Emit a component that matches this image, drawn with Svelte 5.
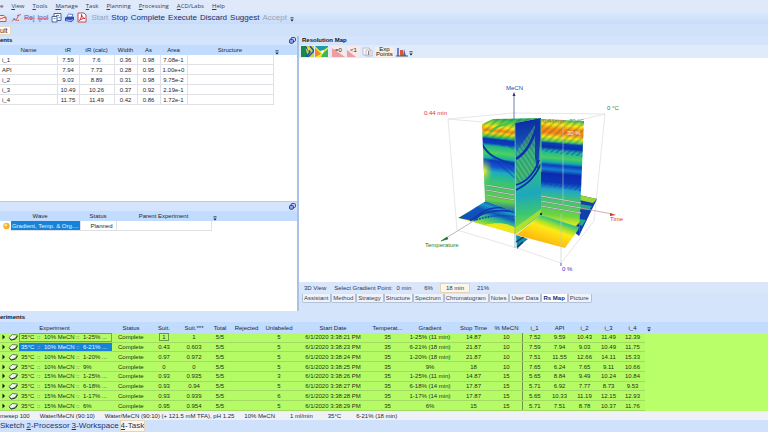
<script lang="ts">
  type Peak = { name: string; values: string[] };
  type Run = { parts: string[]; values: string[] };

  const menu = [
    { key: "V", rest: "iew" },
    { key: "T", rest: "ools" },
    { key: "M", rest: "anage" },
    { key: "T", rest: "ask" },
    { key: "P", rest: "lanning" },
    { key: "P", rest: "rocessing" },
    { key: "A", rest: "CD/Labs" },
    { key: "H", rest: "elp" },
  ];

  const actions = ["Start", "Stop", "Complete", "Execute", "Discard", "Suggest", "Accept"];
  const disabledActions = ["Start", "Accept"];

  const peakHeads = ["Name", "tR", "tR (calc)", "Width", "As", "Area", "Structure"];
  const peaks: Peak[] = [
    { name: "i_1", values: ["7.59", "7.6", "0.36", "0.98", "7.08e-1"] },
    { name: "API", values: ["7.94", "7.73", "0.28", "0.95", "1.00e+0"] },
    { name: "i_2", values: ["9.03", "8.89", "0.31", "0.98", "9.75e-2"] },
    { name: "i_3", values: ["10.49", "10.26", "0.37", "0.92", "2.19e-1"] },
    { name: "i_4", values: ["11.75", "11.49", "0.42", "0.86", "1.72e-1"] },
  ];

  const points = ["0 min", "6%", "18 min", "21%"];
  let point = $state("18 min");

  const tabs = ["Assistant", "Method", "Strategy", "Structure", "Spectrum", "Chromatogram", "Notes", "User Data", "Rs Map", "Picture"];
  let tab = $state("Rs Map");

  const runHeads = ["Status", "Suit.", "Suit.***", "Total", "Rejected", "Unlabeled", "Start Date", "Temperat...", "Gradient", "Stop Time", "% MeCN", "i_1", "API", "i_2", "i_3", "i_4"];
  const runs: Run[] = [
    { parts: ["10% MeCN", "1-25% ..."], values: ["Complete", "1", "1", "5/5", "", "5", "6/1/2020 3:38:21 PM", "35", "1-25% (11 min)", "14.87", "10", "7.52", "9.59", "10.43", "11.49", "12.39"] },
    { parts: ["10% MeCN", "6-21% ..."], values: ["Complete", "0.43", "0.603", "5/5", "", "5", "6/1/2020 3:38:23 PM", "35", "6-21% (18 min)", "21.87", "10", "7.59", "7.94", "9.03", "10.49", "11.75"] },
    { parts: ["10% MeCN", "1-20% ..."], values: ["Complete", "0.97", "0.972", "5/5", "", "5", "6/1/2020 3:38:24 PM", "35", "1-20% (18 min)", "21.87", "10", "7.51", "11.55", "12.66", "14.11", "15.33"] },
    { parts: ["10% MeCN", "9%"], values: ["Complete", "0", "0", "5/5", "", "5", "6/1/2020 3:38:25 PM", "35", "9%", "18", "10", "7.65", "6.24", "7.65", "9.11", "10.66"] },
    { parts: ["15% MeCN", "1-25% ..."], values: ["Complete", "0.93", "0.935", "5/5", "", "3", "6/1/2020 3:38:26 PM", "35", "1-25% (11 min)", "14.87", "15", "5.65", "8.84", "9.49", "10.24", "10.84"] },
    { parts: ["15% MeCN", "6-18% ..."], values: ["Complete", "0.93", "0.94", "5/5", "", "5", "6/1/2020 3:38:27 PM", "35", "6-18% (14 min)", "17.87", "15", "5.71", "6.92", "7.77", "8.73", "9.53"] },
    { parts: ["15% MeCN", "1-17% ..."], values: ["Complete", "0.93", "0.939", "5/5", "", "6", "6/1/2020 3:38:28 PM", "35", "1-17% (14 min)", "17.87", "15", "5.65", "10.33", "11.19", "12.15", "12.93"] },
    { parts: ["15% MeCN", "6%"], values: ["Complete", "0.95", "0.954", "5/5", "", "5", "6/1/2020 3:38:29 PM", "35", "6%", "15", "15", "5.71", "7.51", "8.78", "10.37", "11.76"] },
  ];
  let selectedRun = $state(1);

  const conditions = ["mesep 100", "Water/MeCN (90:10)", "Water/MeCN (90:10) (+ 121.5 mM TFA), pH 1.25", "10% MeCN", "1 ml/min", "35°C", "6-21% (18 min)"];
  const windows = ["2-Processor", "3-Workspace", "4-Task"];
</script>

{#snippet floatIcon()}
  <button class="float" aria-label="Float panel">
    <svg viewBox="0 0 7 7" width="7" height="7">
      <rect x="2.2" y=".6" width="4.2" height="3.8" rx=".8" fill="#dbe6ff" stroke="#2437a8" />
      <rect x=".6" y="2.4" width="3.8" height="3.8" rx=".8" fill="#8fa8ea" stroke="#2437a8" />
    </svg>
  </button>
{/snippet}

{#snippet more()}
  <svg class="more" viewBox="0 0 4 5" width="4" height="5"><path d="M.5 .8h3" stroke="#345" /><path d="M.3 2.4h3.4L2 4.6z" fill="#123" /></svg>
{/snippet}

<div class="app">
  <nav class="menu">
    <button>e</button>
    {#each menu as m}
      <button><u>{m.key}</u>{m.rest}</button>
    {/each}
  </nav>

  <div class="toolbar">
    <button aria-label="Open">
      <svg viewBox="0 0 8 10" width="8" height="10"><path d="M0 2.5h4l2 2v4H0M0 6l4-1.5 2 .3" fill="#ffe9e4" stroke="#d05348" /></svg>
    </button>
    <button class="wide" aria-label="Integrate">
      <svg viewBox="0 0 11 10" width="11" height="10"><path d="M1 8.5l2-2.5 2 1 3-5 2-.5M4 7l4 .5" fill="none" stroke="#d8686a" /><path d="M6 3l2-1M2 6h2" stroke="#5468c8" /></svg>
    </button>
    <button class="struck">Rej</button>
    <button class="struck">lpol</button>
    <button class="wide" aria-label="Copy report">
      <svg viewBox="0 0 11 11" width="11" height="11"><path d="M3 1.5h7v7H3z" fill="#f6faff" stroke="#4a679a" /><path d="M1 4.5h5v5.500H1z" fill="#fff" stroke="#4a679a" /><path d="M2.500 6.500h2M5 3.500h3M7.500 5.500h1.500" stroke="#6d87b5" /></svg>
    </button>
    <button class="wide" aria-label="Print">
      <svg viewBox="0 0 11 10" width="11" height="10"><path d="M3 4l1.500-3 4.500.5-1.500 3" fill="#fff" stroke="#3850a8" stroke-width=".7" /><path d="M1 4.500l3-1 6 .3v3L7.500 9 1 8z" fill="#304dbb" /><path d="M2 7l5 .5 2-1" fill="none" stroke="#a8c2ff" /></svg>
    </button>
    <button class="wide" aria-label="Export PDF">
      <svg viewBox="0 0 10 11" width="10" height="11"><path d="M1 1h6l2 2v7H1z" fill="#fff" stroke="#c54746" /><path d="M2.500 8.500C4 6 5 4 4.500 2.500 5 5 6.500 6.500 8 6.500 6 6.300 4 7 2.500 8.500z" fill="none" stroke="#c8282c" /></svg>
    </button>
    <div class="actions">
      {#each actions as a}
        <button disabled={disabledActions.includes(a)}>{a}</button>
      {/each}
      {@render more()}
    </div>
  </div>

  <div class="doctabs"><button>ult</button></div>

  <main>
    <div class="left">
      <section class="pane components">
        <h2>ents {@render floatIcon()}</h2>
        <table class="grid">
          <colgroup><col class="c-name" /><col class="c-tr" /><col class="c-calc" /><col class="c-small" /><col class="c-small" /><col class="c-area" /><col class="c-struct" /><col /></colgroup>
          <thead>
            <tr>{#each peakHeads as h}<th>{h}</th>{/each}<th class="end">{@render more()}</th></tr>
          </thead>
          <tbody>
            {#each peaks as p}
              <tr>
                <td class="name">{p.name}</td>
                {#each p.values as v}<td>{v}</td>{/each}
                <td></td><td class="end"></td>
              </tr>
            {/each}
          </tbody>
        </table>
      </section>

      <section class="pane waves">
        <h2>{@render floatIcon()}</h2>
        <table class="grid">
          <colgroup><col class="c-ball" /><col class="c-wave" /><col class="c-wstatus" /><col class="c-parent" /><col /></colgroup>
          <thead>
            <tr><th colspan="2">Wave</th><th>Status</th><th>Parent Experiment</th><th class="end">{@render more()}</th></tr>
          </thead>
          <tbody>
            <tr>
              <td class="ball"><svg viewBox="0 0 8 8" width="8" height="8"><circle cx="4.500" cy="4" r="3.200" fill="#f5ad2c" /><circle cx="3.800" cy="3" r="1.600" fill="#ffe08a" /></svg></td>
              <td class="picked">Gradient, Temp. &amp; Org....</td>
              <td class="name">Planned</td><td></td><td class="end"></td>
            </tr>
          </tbody>
        </table>
      </section>
    </div>

    <section class="right">
      <h2>Resolution Map</h2>
      <div class="maptools">
        <button aria-label="2D map"><svg viewBox="0 0 13 11" width="13" height="11"><path d="M0 0h13v11H0z" fill="#c9d44a" /><path d="M0 0h4l3 11H0z" fill="#19874e" /><path d="M4 0l5 6-4 5M9 0l4 5-6 6" stroke="#1b53a5" stroke-width="1.500" fill="none" /><path d="M6 1l3 2-2 2z" fill="#f3ec35" /></svg></button>
        <button aria-label="3D map"><svg viewBox="0 0 13 11" width="13" height="11"><path d="M0 0h13v11H0z" fill="#f2e437" /><path d="M0 0l6 6 7-5V0z" fill="#1e9ba5" /><path d="M0 2l6 6-6 3z" fill="#ef8a25" /><path d="M8 7l5-4v8H6z" fill="#3fb54f" /><path d="M5 5l4-1-1 4z" fill="#fff" /></svg></button>
        <button class="limit"><svg viewBox="0 0 13 11" width="13" height="11"><path d="M0 2l13 9H0z" fill="#ee9da2" /></svg><span>=0</span></button>
        <button class="limit"><svg viewBox="0 0 13 11" width="13" height="11"><path d="M0 4l9 7H0z" fill="#ee9da2" /></svg><span>&lt;1</span></button>
        <button aria-label="Labels"><svg viewBox="0 0 13 11" width="13" height="11"><path d="M2 2h6l1 1v6H2zM5 4h5l1 1v5H5z" fill="#f7f7f7" stroke="#b4b4be" stroke-width=".8" /><path d="M7.500 5v4" stroke="#888" /></svg></button>
        <button class="exp">Exp<br />Points</button>
        <button aria-label="Chart"><svg viewBox="0 0 13 11" width="13" height="11"><path d="M2 10V2h2v8z" fill="#6c7fc4" /><path d="M5 10V4h3v6z" fill="#d3593d" /><path d="M8 10l1-7 2 7z" fill="#5560a8" /><path d="M1 10h12" stroke="#555" /></svg></button>
        {@render more()}
      </div>

      <div class="plot">
        <svg viewBox="299 58 469 222" role="img" aria-label="Resolution map cube">
          <defs>
            <linearGradient id="back" gradientUnits="userSpaceOnUse" x1="500" y1="118" x2="490" y2="210">
              <stop offset="0" stop-color="#2fb25e" /><stop offset=".05" stop-color="#8ed834" />
              <stop offset=".09" stop-color="#fbe618" /><stop offset=".13" stop-color="#fb8a14" />
              <stop offset=".16" stop-color="#f9d414" /><stop offset=".19" stop-color="#6dcb3c" />
              <stop offset=".21" stop-color="#11a58f" /><stop offset=".225" stop-color="#0b32b4" />
              <stop offset=".27" stop-color="#0c3cbf" /><stop offset=".3" stop-color="#20b58d" />
              <stop offset=".37" stop-color="#4dd25a" /><stop offset=".43" stop-color="#16b29c" />
              <stop offset=".455" stop-color="#0c3abe" /><stop offset=".52" stop-color="#1556cf" />
              <stop offset=".58" stop-color="#1cadbf" /><stop offset=".68" stop-color="#36c374" />
              <stop offset=".88" stop-color="#65d145" /><stop offset="1" stop-color="#1458c5" />
            </linearGradient>
            <linearGradient id="side" gradientUnits="userSpaceOnUse" x1="562" y1="118" x2="553" y2="222">
              <stop offset="0" stop-color="#35b46f" /><stop offset=".03" stop-color="#9fdc31" />
              <stop offset=".06" stop-color="#fde716" /><stop offset=".1" stop-color="#fc8c14" />
              <stop offset=".14" stop-color="#fb7f16" /><stop offset=".18" stop-color="#f9e61a" />
              <stop offset=".22" stop-color="#4fce61" /><stop offset=".24" stop-color="#0b3bbe" />
              <stop offset=".28" stop-color="#0a2dae" /><stop offset=".31" stop-color="#1cb39c" />
              <stop offset=".38" stop-color="#48ce64" /><stop offset=".42" stop-color="#15aba7" />
              <stop offset=".45" stop-color="#0e3ec2" /><stop offset=".49" stop-color="#1480cd" />
              <stop offset=".53" stop-color="#0b2baf" /><stop offset=".61" stop-color="#0b34b9" />
              <stop offset=".68" stop-color="#21a5c8" /><stop offset=".77" stop-color="#3cc377" />
              <stop offset=".92" stop-color="#6cd342" /><stop offset="1" stop-color="#d9ea25" />
            </linearGradient>
            <linearGradient id="mid" gradientUnits="userSpaceOnUse" x1="518" y1="120" x2="532" y2="238">
              <stop offset="0" stop-color="#0c2ba1" /><stop offset=".18" stop-color="#1550c4" />
              <stop offset=".27" stop-color="#1fa9a9" /><stop offset=".45" stop-color="#2fb88e" />
              <stop offset=".62" stop-color="#1da7bd" /><stop offset=".78" stop-color="#3cc672" />
              <stop offset=".9" stop-color="#7ed93a" /><stop offset="1" stop-color="#f0ec1f" />
            </linearGradient>
            <linearGradient id="floorL" gradientUnits="userSpaceOnUse" x1="494" y1="201" x2="485" y2="228">
              <stop offset="0" stop-color="#1146b9" /><stop offset=".2" stop-color="#1b9ac4" />
              <stop offset=".38" stop-color="#1355bd" /><stop offset=".54" stop-color="#26b19c" />
              <stop offset=".74" stop-color="#67d248" /><stop offset="1" stop-color="#f9ea1b" />
            </linearGradient>
            <linearGradient id="floorR" gradientUnits="userSpaceOnUse" x1="554" y1="213" x2="544" y2="241">
              <stop offset="0" stop-color="#1badb5" /><stop offset=".2" stop-color="#3fc873" />
              <stop offset=".36" stop-color="#a3e12e" /><stop offset=".52" stop-color="#fdea15" />
              <stop offset="1" stop-color="#fdbb10" />
            </linearGradient>
            <radialGradient id="spot">
              <stop offset="0" stop-color="#f8ef26" /><stop offset="1" stop-color="#7fd441" stop-opacity="0" />
            </radialGradient>
            <pattern id="hatch" width="5" height="5" patternUnits="userSpaceOnUse" patternTransform="rotate(48)">
              <path d="M1 0v5" stroke="#0b5a3c" stroke-width=".7" stroke-opacity=".7" />
            </pattern>
            <pattern id="hatchBlue" width="4" height="4" patternUnits="userSpaceOnUse" patternTransform="rotate(-48)">
              <path d="M1 0v4" stroke="#0b36b1" stroke-width="1" stroke-opacity=".8" />
            </pattern>
            <pattern id="hatchSide" width="4" height="4" patternUnits="userSpaceOnUse" patternTransform="rotate(48)">
              <path d="M1 0v4" stroke="#0b36b1" stroke-width="1" stroke-opacity=".8" />
            </pattern>
            <pattern id="hatchMid" width="4" height="4" patternUnits="userSpaceOnUse" patternTransform="rotate(-33)">
              <path d="M1 0v4" stroke="#0d3f73" stroke-width=".7" stroke-opacity=".7" />
            </pattern>
            <clipPath id="backClip"><path d="M482 123l11-5 48-1-26 5v89l-30-11z" /></clipPath>
            <clipPath id="sideClip"><path d="M541 118l43 2-5 115v-9l-38-12z" /></clipPath>
            <clipPath id="midClip"><path d="M515 122l26-5v97l-25 19z" /></clipPath>
            <clipPath id="floorClip"><path d="M458 217l28-17 29 11 1 22z" /></clipPath>
          </defs>

          <!-- bounding box -->
          <g fill="none" stroke="#dfe0e6" stroke-width=".8">
            <path d="M448 118l66-6 91 1-42 10M448 118l35 3M448 118l9 111 60 18 44 15 33-42 11-107" />
          </g>

          <!-- floor, far right -->
          <path d="M579 194l18 4-18 37-5-4z" fill="#0e40ae" />
          <path d="M579 194l18 4-4 4-14-3z" fill="#9ad62f" />
          <path d="M580 203l12 2-3 4-10-1zM579 218l7 1-4 6-4-2z" fill="#28a685" />

          <!-- floor, left -->
          <g clip-path="url(#floorClip)">
            <path d="M450 195h70v40h-70z" fill="url(#floorL)" />
            <path d="M458 217l20-11 8 4-11 10z" fill="#1250bd" />
            <path d="M474 218c10-8 25-10 42-7M470 220c12-9 22-18 44-11" fill="none" stroke="#103aad" stroke-width="1.600" />
            <path d="M476 219c14-5 28-5 42-3" fill="none" stroke="#1449af" stroke-width="1.600" stroke-dasharray="2 1" />
            <path d="M484 224c14-3 24-2 34 4v8z" fill="#fbea14" opacity=".9" />
          </g>
          <path d="M516 234l12 4-5 4-6 6z" fill="#168ba2" />
          <path d="M516 241l9-6M517 246l6-5" stroke="#0c367f" stroke-width="1.500" />

          <!-- back plane -->
          <g clip-path="url(#backClip)">
            <path d="M480 115h62v97h-62z" fill="url(#back)" />
            <ellipse cx="484" cy="170" rx="9" ry="14" fill="url(#spot)" />
            <path d="M482 143c5 10 12 15 34 21" fill="none" stroke="#0c34b2" stroke-width="2" />
            <path d="M480 115h62v24h-62z" fill="url(#hatch)" />
            <path d="M494 138l22 3v8l-26-8zM488 156l28 5v18z" fill="url(#hatchBlue)" />
            <path d="M490 131c8-7 18-9 26-11" fill="none" stroke="#3cc84e" stroke-width="2" />
          </g>

          <!-- floor, front right -->
          <path d="M516 234l25-20 38 12-1 3-13 18z" fill="url(#floorR)" />
          <path d="M541 214l38 6v6z" fill="#1ba0ac" />

          <!-- side plane -->
          <g clip-path="url(#sideClip)">
            <path d="M540 116h46v120h-46z" fill="url(#side)" />
            <path d="M540 116h46v28h-46z" fill="url(#hatch)" />
            <path d="M541 144l43 3v9l-43-6zM541 174l43 6v11l-43-8z" fill="url(#hatchSide)" />
            <path d="M572 229l9-9v16z" fill="#0d3aa8" />
          </g>

          <!-- centre plane -->
          <g clip-path="url(#midClip)">
            <path d="M514 115h28v120h-28z" fill="url(#mid)" />
            <path d="M517 150l18-26 3 40-22 22z" fill="#5bc752" opacity=".5" />
            <path d="M514 130l24-6v44l-24 18z" fill="url(#hatchMid)" />
            <path d="M516 158c10-6 18-20 22-38" fill="none" stroke="#0d2fad" stroke-width="2.500" />
            <path d="M516 184c10-3 18-10 23-25M516 189c12-6 19-13 25-26" fill="none" stroke="#0c2faf" stroke-width="1.800" />
            <path d="M535 119h6l-3 52-3-14z" fill="#1031ab" opacity=".85" />
            <path d="M516 232l25-19v-5l-25 18z" fill="#dbe724" opacity=".6" />
          </g>
          <path d="M541 118v53" stroke="#72ca5d" stroke-width="1" />
          <path d="M515 122v125" stroke="#6aa9b9" stroke-width=".7" />

          <!-- scan levels -->
          <g fill="none" stroke="#5e807a" stroke-width="1.600">
            <path d="M486 184l29 5M486 189l29 5M486 194l29 5M541 195l40 7M541 200l40 7M541 205l40 7" />
          </g>
          <g fill="none" stroke="#e3dfd9" stroke-width=".8">
            <path d="M486 184l29 5M486 189l29 5M486 194l29 5M541 195l40 7M541 200l40 7M541 205l40 7" />
          </g>
          <path d="M563 124v78M561 213v49" stroke="#bcc9c5" stroke-width=".6" />
          <circle cx="541" cy="213" r="1.200" fill="#123a5a" />

          <!-- axes -->
          <path d="M514 118V94" stroke="#4b5a9b" stroke-width=".8" /><path d="M514 91l1.500 4h-3z" fill="#26367f" />
          <path d="M472 221l-26 16" stroke="#9fa9a2" stroke-width=".8" /><path d="M441 240l6-4 1 2z" fill="#176b2b" stroke="#176b2b" stroke-width=".5" />
          <path d="M581 207l31 6" stroke="#c89a90" stroke-width=".8" /><path d="M616 214l-6-2v3z" fill="#c93a24" />
          <path d="M561 262v3" stroke="#5058d8" />

          <g class="labels">
            <text x="506" y="89" fill="#2b3fb5">MeCN</text>
            <text x="424" y="114" fill="#e2352f">0.44 min</text>
            <text x="607" y="109" fill="#1c8538">0 °C</text>
            <text x="610" y="220" fill="#d8402e">Time</text>
            <text x="425" y="246" fill="#1d7f34">Temperature</text>
            <text x="562" y="270" fill="#2c32c8">0 %</text>
            <text x="543" y="122" fill="#ee5c50">0.44 min</text>
            <text x="569" y="122" fill="#37a574">70 °C</text>
            <text x="567" y="134" fill="#f2f4ff">30 %</text>
          </g>
        </svg>
      </div>

      <div class="points">
        <button class="view3d">3D View</button>
        <span class="label">Select Gradient Point:</span>
        {#each points as p}
          <button class:on={point === p} onclick={() => (point = p)}>{p}</button>
        {/each}
      </div>
      <div class="tabs">
        {#each tabs as t}
          <button class:on={tab === t} onclick={() => (tab = t)}>{t}</button>
        {/each}
      </div>
    </section>
  </main>

  <section class="experiments">
    <h2>eriments</h2>
    <div class="runs">
      <table>
        <colgroup>
          <col class="r-icon" /><col class="r-exp" /><col class="r-status" /><col class="r-28" /><col class="r-32" /><col class="r-20" /><col class="r-33" /><col class="r-32" /><col class="r-date" /><col class="r-33" /><col class="r-grad" /><col class="r-35" /><col class="r-31" /><col class="r-25" /><col class="r-25" /><col class="r-25" /><col class="r-23" /><col class="r-25" /><col />
        </colgroup>
        <thead>
          <tr>
            <th></th><th class="exphead">Experiment</th>
            {#each runHeads as h}<th>{h}</th>{/each}
            <th class="end">{@render more()}</th>
          </tr>
        </thead>
        <tbody>
          {#each runs as r, n}
            <tr onclick={() => (selectedRun = n)}>
              <td class="ricon">
                <svg viewBox="0 0 18 8" width="18" height="8"><path d="M2.500 1.500L5 4 2.500 6.500z" fill="#111" /><path d="M9 4.500l3.500-3 5 .5-2.500 3.500-4 1.500z" fill="#eef4ea" stroke="#3c4a3c" stroke-width=".7" /><path d="M9.500 5.500l2 1.500 4-1 2-3" fill="none" stroke="#2d392d" /></svg>
              </td>
              <td class:picked={selectedRun === n} class:boxed={n === 0}>
                <div class="condition"><span>35°C</span><span>::</span><span>{r.parts[0]}</span><span>::</span><span>{r.parts[1]}</span></div>
              </td>
              {#each r.values as v, k}
                <td class:status={k === 0} class:rule={k === 10} class:focus={n === 0 && k === 1}><span>{v}</span></td>
              {/each}
              <td class="end"></td>
            </tr>
          {/each}
        </tbody>
      </table>
    </div>
  </section>

  <footer class="conditions">
    {#each conditions as c}<span>{c}</span>{/each}
  </footer>

  <nav class="windows">
    <button>Sketch</button>
    {#each windows as w}
      <button class:on={w === "4-Task"}><u>{w[0]}</u>{w.slice(1)}</button>
    {/each}
  </nav>
</div>

<style>
  :global(body) { background: #d5e4fa; }

  .app {
    display: grid;
    grid-template-rows: 11px 13px 12px minmax(0, 1fr) 98px 9px 12px;
    height: 100vh;
    overflow: hidden;
    background: #d5e4fa;
    color: #26282e;
    font: 6px/8px "Liberation Sans", Arial, sans-serif;
  }
  button {
    margin: 0; padding: 0;
    border: 0; background: none;
    font: inherit; color: inherit;
    white-space: nowrap;
  }
  svg { display: block; }
  table { border-collapse: collapse; table-layout: fixed; width: 100%; }
  th, td { padding: 0; font-weight: normal; text-align: center; white-space: nowrap; overflow: hidden; }
  h2 {
    display: flex; align-items: center; justify-content: space-between;
    height: 9px; margin: 0; padding: 0 1px 0 0;
    font-size: 6px; line-height: 9px; font-weight: bold; color: #10131c;
    background: #d3e4fc;
  }
  .more { flex: none; margin-top: 4px; }
  .float { margin-left: auto; }

  /* menu + toolbars */
  .menu {
    display: flex; align-items: center; gap: 8px;
    color: #2f3e5e;
    background: #dfe9fa;
    font-family: "Open Sans", "Noto Sans", sans-serif;
  }
  .toolbar {
    display: flex; align-items: center; gap: 3px;
    background: linear-gradient(#dceafd, #c5dcfb);
    font-size: 8px; line-height: 12px; color: #1b2e68;
  }
  .toolbar .wide { margin-right: -1px; }
  .toolbar .struck { color: #5a55b5; font-size: 7px; text-decoration: line-through #d77c93; }
  .actions { display: flex; align-items: center; gap: 3px; margin-left: 2px; }
  .actions button:disabled { color: #9aa3b4; }
  .doctabs { background: #d0e1fa; padding-top: 2px; }
  .doctabs button {
    display: block; height: 9px; padding-right: 3px;
    background: #fdfdff; border: 1px solid #e6d9c4; border-left: 0;
    font-size: 7px; line-height: 7px;
  }

  /* panes */
  main {
    display: grid;
    grid-template-columns: 298px minmax(0, 1fr);
    min-height: 0;
    padding-bottom: 2px;
  }
  .left {
    display: grid; grid-template-rows: 3fr 2fr;
    border-right: 1px solid #a9c1e6;
    min-height: 0; background: #fff;
  }
  .pane { background: #fff; min-height: 0; }
  .grid th { height: 10px; background: #c1dcfe; }
  .grid td { height: 9px; border: solid #dfe1e6; border-width: 0 1px 1px 0; line-height: 8px; }
  .grid .name { text-align: left; padding-left: 2px; }
  .grid .end, .runs .end { border: 0; text-align: left; padding-left: 2px; }
  .c-name { width: 57px; }
  .c-tr { width: 22px; }
  .c-calc { width: 35px; }
  .c-small { width: 23px; }
  .c-area { width: 27px; }
  .c-struct { width: 86px; }
  .c-ball { width: 11px; }
  .c-wave { width: 69px; }
  .c-wstatus { width: 36px; }
  .c-parent { width: 95px; }
  .waves h2 { border-top: 1px solid #b5cdf0; }
  .waves .ball svg { margin-left: 2px; }
  .waves .name { padding-left: 10px; }
  .waves .ball { border: 0; }
  .picked { background: #1683d9; color: #e6f3ff; }

  /* resolution map */
  .right {
    display: grid;
    grid-template-rows: 9px 13px minmax(0, 1fr) 11px 18px;
    border-left: 1px solid #a9c1e6;
    min-height: 0;
  }
  .right h2 { padding-left: 3px; }
  .maptools { display: flex; align-items: center; gap: 1px; padding-left: 2px; background: #dfeafb; }
  .maptools .limit { display: grid; background: #f6e9ea; margin-left: 1px; }
  .maptools .limit svg, .maptools .limit span { grid-area: 1 / 1; }
  .maptools .limit:nth-child(3) { margin-left: 3px; }
  .maptools .exp { padding: 0 1px; background: #f7efe3; line-height: 5px; color: #111; }
  .plot { background: #fff; min-height: 0; }
  .plot svg { width: 100%; height: 100%; }
  .labels { font-size: 6px; }
  .points { display: flex; align-items: center; padding-left: 2px; background: #dae7fb; color: #26365e; }
  .points button { height: 10px; line-height: 8px; padding: 0 5px; border: 1px solid transparent; margin-right: 1px; }
  .points .view3d { padding: 0 2px; }
  .points .label { padding-left: 4px; margin-right: -2px; }
  .points button.on { background: #fbf5ea; border-color: #e4d3b4; }
  .tabs { display: flex; align-items: flex-start; padding: 1px 0 0 3px; }
  .tabs button {
    height: 9px; padding: 0 2px 0 1px; line-height: 7px;
    background: #eef3fb; border: 1px solid #b4c0d4; border-top: 0;
    border-radius: 0 0 2px 2px; color: #3c4152;
  }
  .tabs button.on { background: #fff; color: #12306f; font-weight: bold; }

  /* experiments */
  .experiments { display: grid; grid-template-rows: 9px minmax(0, 1fr); min-height: 0; }
  .runs { min-height: 0; overflow: hidden; background: #b5fb66; }
  .runs table { height: 100%; }
  .runs th { height: 11px; background: #c1dcfe; }
  .runs .exphead { padding-right: 22px; }
  .runs td {
    border-bottom: 1px solid #a2da64;
    line-height: 8px; color: #20330f;
  }
  .runs tbody { background: #b5fb66; }
  .runs .end { background: #b8ff69; }
  .runs thead .end { background: #c1dcfe; }
  .runs .status { text-align: left; padding-left: 6px; }
  .runs .rule { border-right: 1px solid #6f9148; }
  .runs .focus span { outline: 1px solid #6f9a48; padding: 0 2px; }
  .runs .picked { background: #1683d9; color: #e6f3ff; }
  .runs .boxed { outline: 1px solid #7ba55a; outline-offset: -1px; }
  .condition { display: grid; grid-template-columns: 16px 7px 32px 7px auto; padding-left: 2px; text-align: left; }
  .r-icon { width: 19px; }
  .r-exp { width: 93px; }
  .r-status { width: 38px; }
  .r-20 { width: 20px; }
  .r-23 { width: 23px; }
  .r-25 { width: 25px; }
  .r-28 { width: 28px; }
  .r-31 { width: 31px; }
  .r-32 { width: 32px; }
  .r-33 { width: 33px; }
  .r-35 { width: 35px; }
  .r-grad { width: 52px; }
  .r-date { width: 76px; }

  /* bottom bars */
  .conditions { display: flex; align-items: center; gap: 10px; background: #eef1f6; white-space: nowrap; }
  .conditions span:nth-child(n + 5) { padding-left: 5px; }
  .windows {
    display: flex; align-items: center; gap: 2px;
    background: #d0e2fb; color: #22326e;
    font-size: 8px; line-height: 10px;
  }
  .windows .on { background: #fbf6ec; outline: 1px solid #e2d6bf; }
</style>
